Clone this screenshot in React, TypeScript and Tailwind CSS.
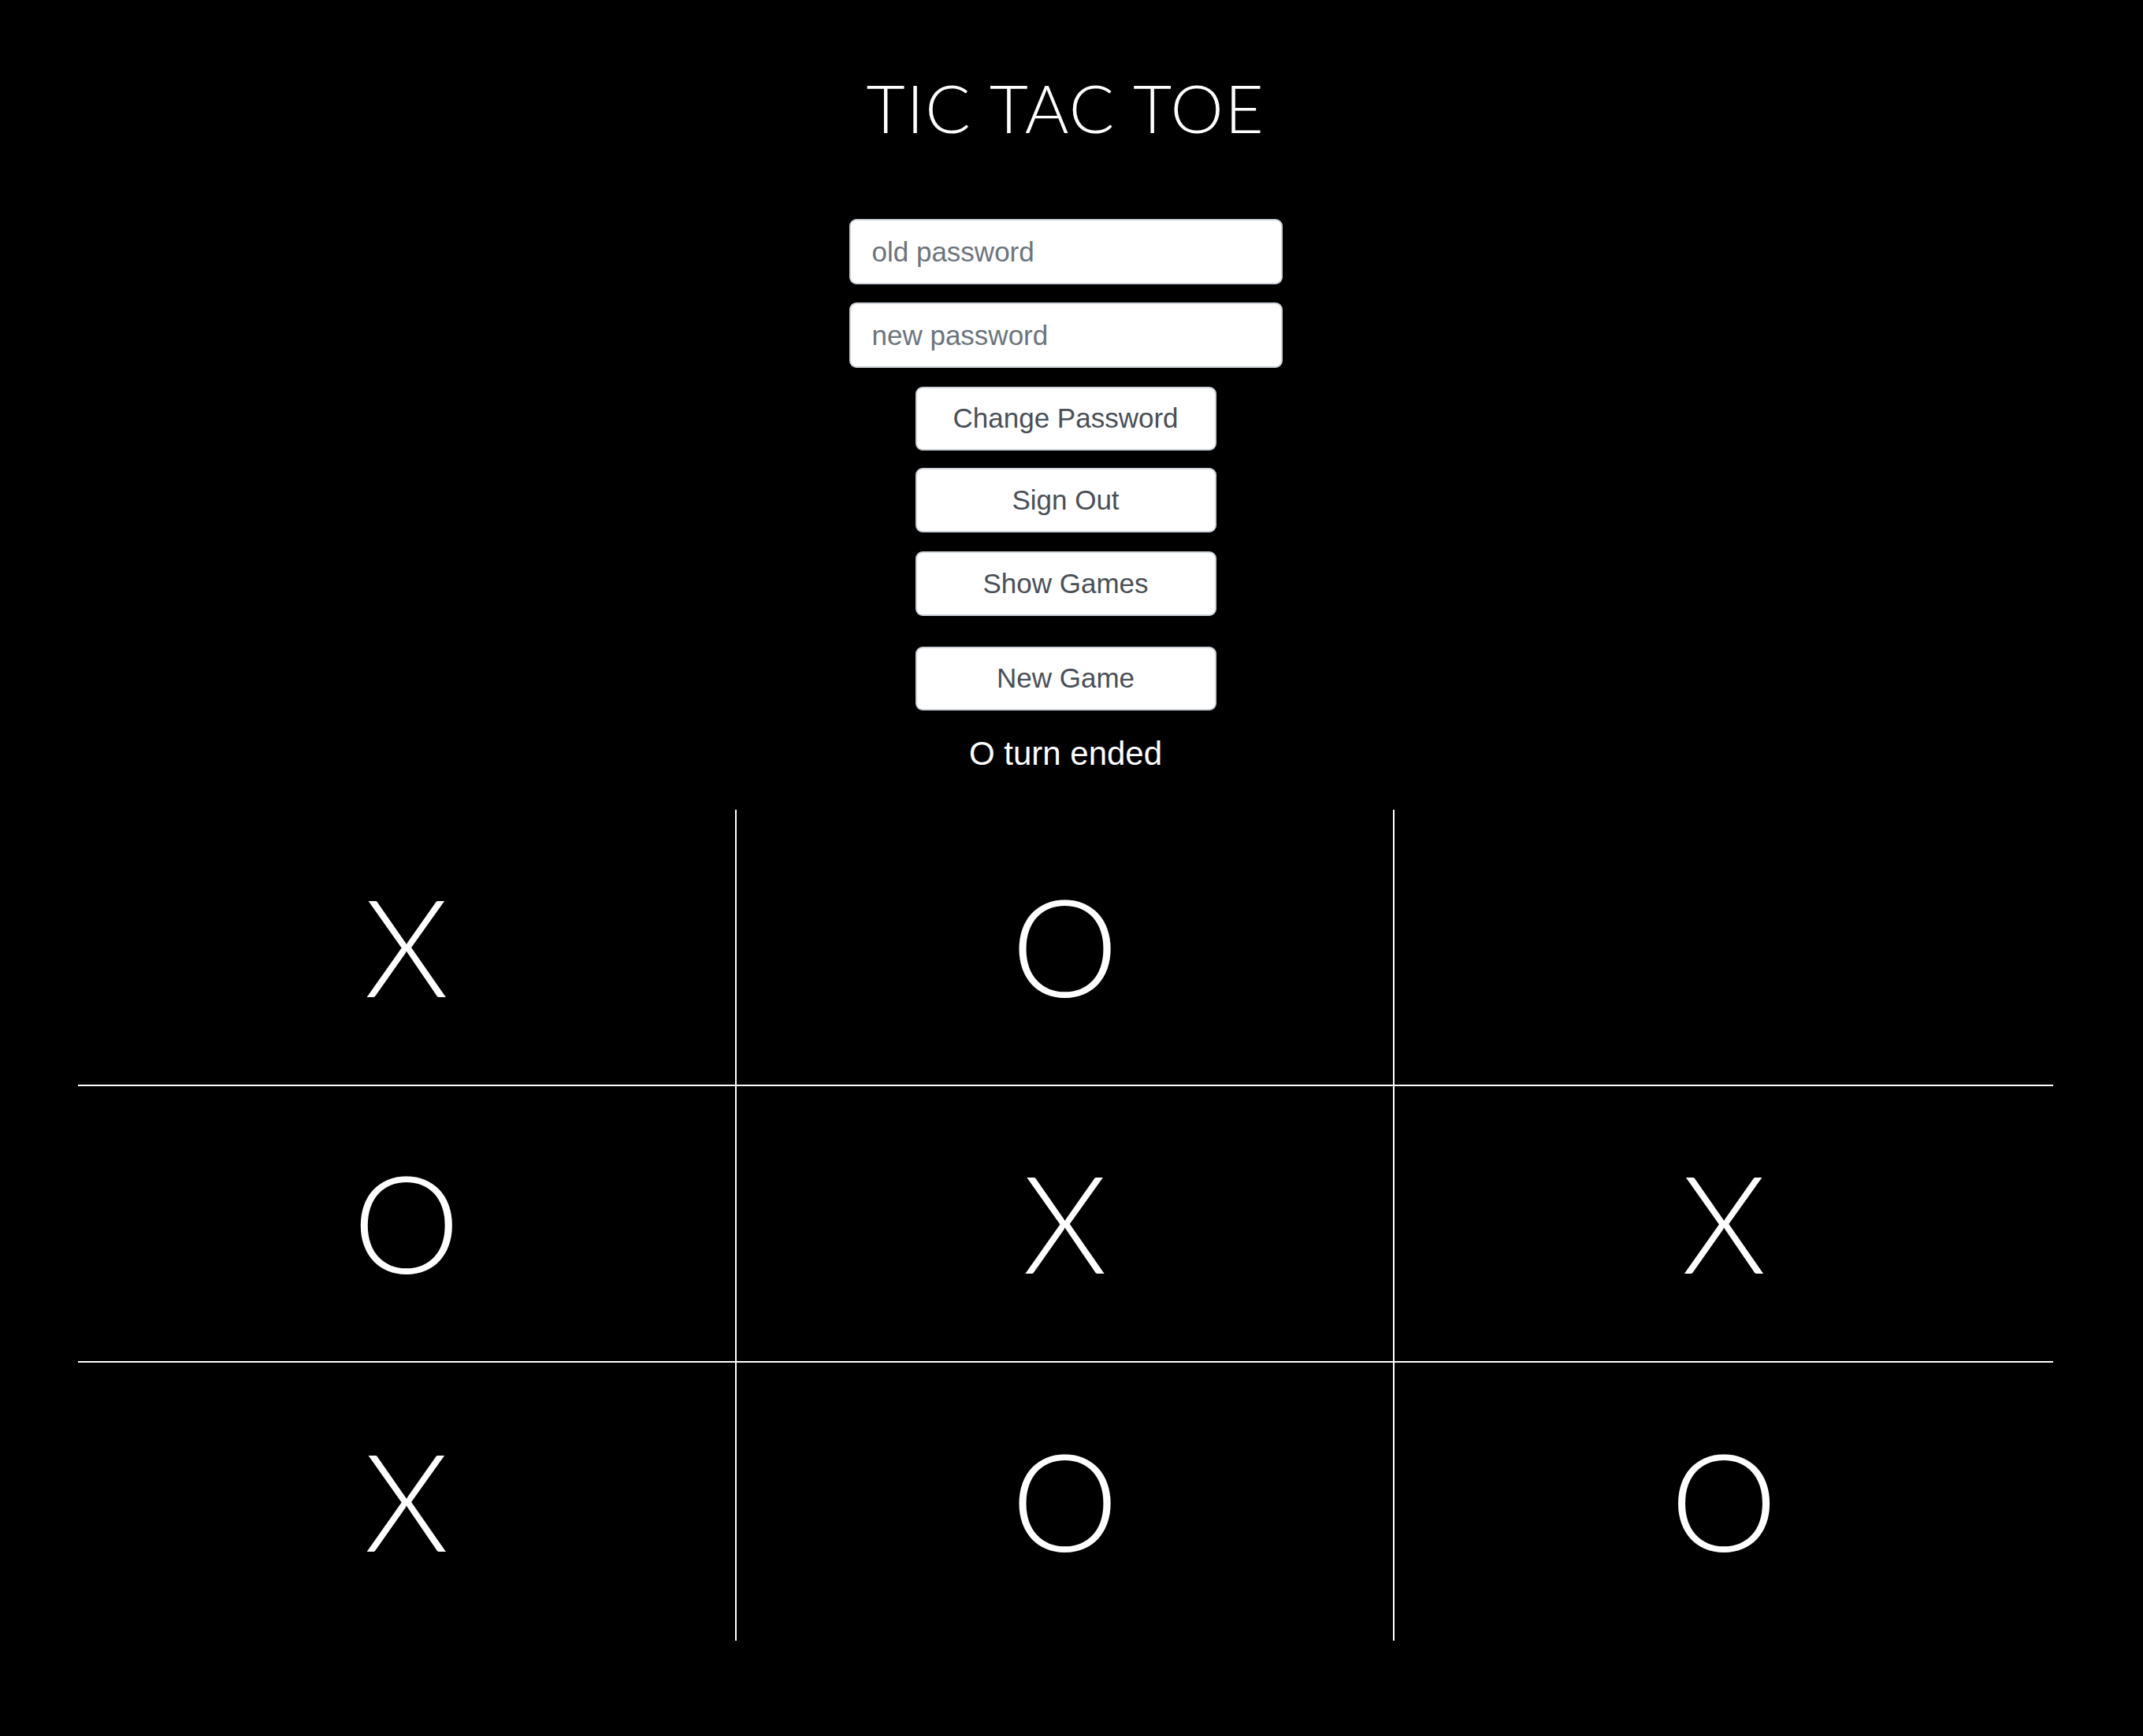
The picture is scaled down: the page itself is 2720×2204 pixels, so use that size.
import React from 'react';

const board = ['X', 'O', '', 'O', 'X', 'X', 'X', 'O', 'O'];

const actions = [
  { label: 'Change Password', cls: 'mt-[24px] h-[81px]' },
  { label: 'Sign Out', cls: 'mt-[22px] h-[82px]' },
  { label: 'Show Games', cls: 'mt-[24px] h-[82px]' },
  { label: 'New Game', cls: 'mt-[39px] h-[81px]' },
];

export default function App() {
  const [oldPassword, setOldPassword] = React.useState('');
  const [newPassword, setNewPassword] = React.useState('');

  return (
    <div className="min-h-[2204px] w-full bg-black text-white">
      <div className="w-[2705px] flex flex-col items-center font-['Liberation_Sans',Arial,sans-serif]">
        {/* Header */}
        <h1 className="mt-[94px] text-[85px] leading-none font-light font-['Lato',sans-serif] tracking-[0.02em]">
          TIC TAC TOE
        </h1>

        {/* Password form */}
        <input
          type="password"
          placeholder="old password"
          value={oldPassword}
          onChange={(e) => setOldPassword(e.target.value)}
          className="mt-[99px] w-[550px] h-[83px] px-[27px] rounded-[9px] border-2 border-[#ced4da] bg-white text-[35px] text-[#495057] placeholder:text-[#6c757d] outline-none"
        />
        <input
          type="password"
          placeholder="new password"
          value={newPassword}
          onChange={(e) => setNewPassword(e.target.value)}
          className="mt-[23px] w-[550px] h-[83px] px-[27px] rounded-[9px] border-2 border-[#ced4da] bg-white text-[35px] text-[#495057] placeholder:text-[#6c757d] outline-none"
        />

        {/* Buttons */}
        {actions.map((a) => (
          <button
            key={a.label}
            type="button"
            className={`${a.cls} w-[382px] rounded-[9px] border-2 border-[#ced4da] bg-white text-[35px] text-[#495057]`}
          >
            {a.label}
          </button>
        ))}

        <p className="mt-[34px] text-[42px] leading-none">O turn ended</p>

        {/* Board */}
        <div className="mt-[50px] w-[2507px] grid grid-cols-3">
          {board.map((v, i) => {
            const col = i % 3;
            const row = Math.floor(i / 3);
            return (
              <div
                key={i}
                className={`flex items-center justify-center pb-[6px] border-white ${row < 2 ? 'h-[351px] border-b-2' : 'h-[353px]'} ${col < 2 ? 'border-r-2' : ''}`}
              >
                <span className="text-[172px] leading-none font-light font-['Lato',sans-serif]">{v}</span>
              </div>
            );
          })}
        </div>
      </div>
    </div>
  );
}
